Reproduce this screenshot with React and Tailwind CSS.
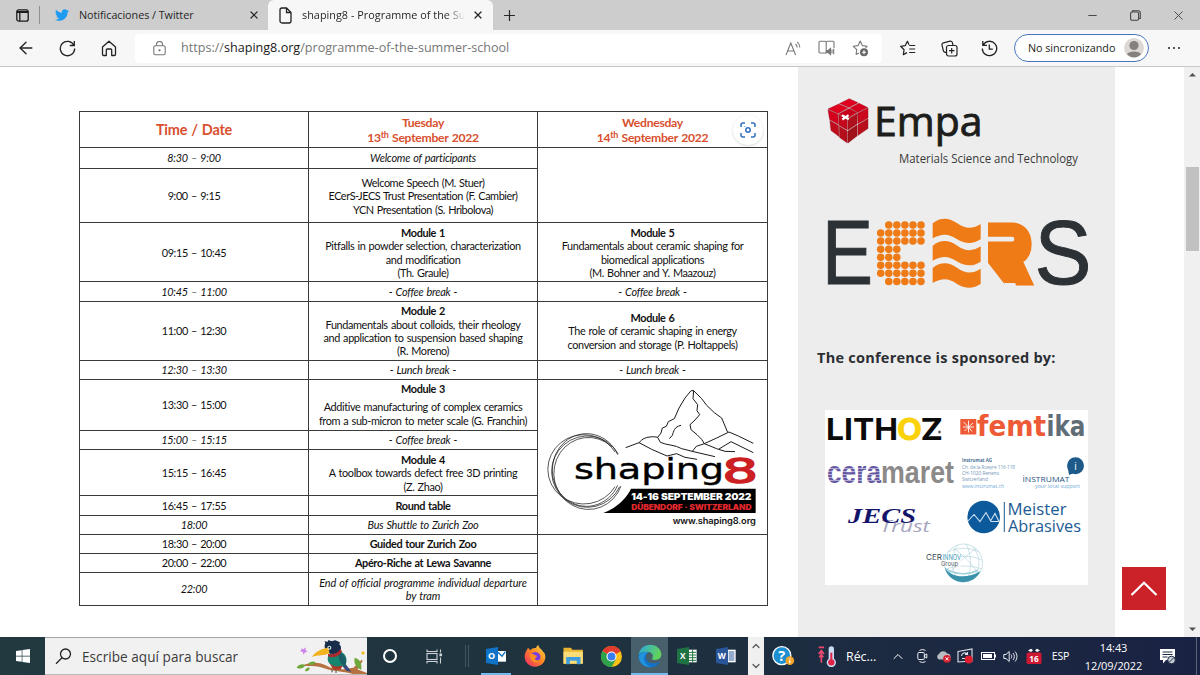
import React from 'react';
import clsx from 'clsx';
import { ArrowLeft, ChevronUp, ChevronDown, X, Plus, Minus } from 'lucide-react';
import { FaWindows, FaTwitter } from 'react-icons/fa';

const UI = 'font-["Open_Sans","Noto_Sans",sans-serif]';

/* Text inside a logo, fitted to a given width */
const Fit = ({ w, children, ...rest }) => (
    <text textLength={w} lengthAdjust="spacingAndGlyphs" {...rest}>{children}</text>
);

// ---------- Browser chrome ----------

const TabStrip = () => (
    <div className="flex h-[30px] shrink-0 items-stretch bg-[#cdcdcd] text-[10.8px] text-[#262626]">
        <div className="flex w-[39px] items-center justify-center pl-[6px]">
            <svg width="13" height="13" viewBox="0 0 13 13" fill="none" stroke="#1b1b1b" strokeWidth="1.3">
                <rect x=".8" y=".8" width="11.4" height="11.4" rx="2" />
                <path d="M1 3h11" strokeWidth="2" />
                <path d="M3.8 3v9" />
            </svg>
        </div>
        <div className="my-1.5 w-px bg-[#8f8f8f]" />
        <div className="flex w-[228px] items-center pl-[15px]">
            <FaTwitter size={14} color="#1d9bf0" />
            <span className="ml-[10px] flex-1 tracking-[-0.05px]">Notificaciones / Twitter</span>
            <X size={12} strokeWidth={2.4} className="mr-[8px]" />
        </div>
        <div className="flex w-[225px] items-center rounded-t-md bg-[#f7f7f7] pl-[11px]">
            <svg width="13" height="17" viewBox="0 0 13 17" fill="none" stroke="#222" strokeWidth="1.3">
                <path d="M1 3a2 2 0 0 1 2-2h4.500l4.500 4.500V14a2 2 0 0 1-2 2H3a2 2 0 0 1-2-2z" />
                <path d="M7.500 1v4.500H12" />
            </svg>
            <span className="ml-[10px] w-[163px] overflow-hidden whitespace-nowrap tracking-[0.04px] [mask-image:linear-gradient(to_right,black_88%,transparent)]">
                shaping8 - Programme of the Su
            </span>
            <X size={12} strokeWidth={2.4} className="ml-[7px] shrink-0" />
        </div>
        <div className="flex flex-1 items-center pl-[8px]">
            <Plus size={17} strokeWidth={1.7} />
        </div>
        <div className="flex items-center text-[#444]">
            <Minus size={13} strokeWidth={1.8} className="mr-[31px]" />
            <svg width="11" height="11" viewBox="0 0 11 11" fill="none" stroke="#444" strokeWidth="1.1" className="mr-[30px]">
                <rect x=".6" y="2" width="8" height="8.300" rx="1.500" />
                <path d="M2.500 2V.8h6a1.800 1.800 0 0 1 1.800 1.800V8.500H9" />
            </svg>
            <X size={15} strokeWidth={1.5} className="mr-[14px]" />
        </div>
    </div>
);

const Toolbar = () => (
    <div className="flex h-[37px] shrink-0 items-center border-b border-[#c8c8c8] bg-[#f7f7f7]">
        <ArrowLeft size={20} strokeWidth={1.6} className="ml-[16px] text-[#222]" />
        <svg width="17" height="17" viewBox="0 0 17 17" fill="none" stroke="#222" strokeWidth="1.3" className="ml-[23px]">
            <path d="M15 5.400A7.200 7.200 0 1 0 15.700 8.600" />
            <path d="M15.300 1v4.500h-4.500" />
        </svg>
        <svg width="16" height="17" viewBox="0 0 16 17" fill="none" stroke="#222" strokeWidth="1.3" strokeLinejoin="round" className="ml-[25px]">
            <path d="M1.500 7 8 1.300 14.500 7v7.300a1.200 1.200 0 0 1-1.200 1.200h-2.600V10a1 1 0 0 0-1-1H6.300a1 1 0 0 0-1 1v5.500H2.700a1.200 1.200 0 0 1-1.200-1.200z" />
        </svg>
        <div className="ml-[18px] flex h-[29px] w-[747px] items-center rounded bg-white pl-[18px]">
            <svg width="13" height="15" viewBox="0 0 13 15" fill="none" stroke="#777" strokeWidth="1.1">
                <rect x=".8" y="4.800" width="11.400" height="9" rx="1.500" />
                <path d="M3.500 4.800V3.500a3 3 0 0 1 6 0v1.300" />
                <circle cx="6.500" cy="9.300" r=".6" fill="#777" />
            </svg>
            <span className="ml-[15px] w-[330px] whitespace-nowrap text-[12.6px] text-[#767676]">
                https://<span className="text-[#1a1a1a]">shaping8.org</span>/programme-of-the-summer-school
            </span>
            <div className="ml-auto flex items-center gap-[17px] pr-[13px]">
                <svg width="16" height="15" viewBox="0 0 16 15" fill="none" stroke="#777" strokeWidth="1.1">
                    <path d="M1 14 5.800 2 10.600 14M2.700 10h6.200M10.500 2.800a5 5 0 0 1 1.600 3.700M12.200.8a8 8 0 0 1 2.600 5.700" />
                </svg>
                <svg width="17" height="16" viewBox="0 0 17 16" fill="none" stroke="#777" strokeWidth="1.1">
                    <path d="M8.200 13H2a1 1 0 0 1-1-1V2.300a1 1 0 0 1 1-1h5a1.200 1.200 0 0 1 1.200 1.200zM8.200 2.500a1.200 1.200 0 0 1 1.200-1.200H15a1 1 0 0 1 1 1V8" />
                    <path d="M8.500 10.500h1.700l2.300-2v6l-2.300-2H8.500z" fill="#777" />
                    <path d="M14 9.500v4M15.700 8.700v5.600" />
                </svg>
                <svg width="17" height="17" viewBox="0 0 17 17" fill="none" stroke="#777" strokeWidth="1.1" strokeLinejoin="round">
                    <path d="m4 14.500.8-4.800L1.300 6.300l4.800-.7L8.200 1l2.200 4.600 4.700.7-1.500 1.600M4 14.500l3-1.600" />
                    <circle cx="12" cy="12.300" r="4" fill="#666" stroke="none" />
                    <path d="M12 10.300v4M10 12.300h4" stroke="#fff" />
                </svg>
            </div>
        </div>
        <svg width="16" height="16" viewBox="0 0 16 16" fill="none" stroke="#222" strokeWidth="1.2" strokeLinejoin="round" className="ml-[18px]">
            <path d="m9 4.700-1.600-3.500L5.300 5.600.6 6.300l3.500 3.400-.8 4.900L7 12.600M9.200 5.500h6M9.200 9h6M9.200 12.500h6" />
        </svg>
        <svg width="17" height="17" viewBox="0 0 17 17" fill="none" stroke="#222" strokeWidth="1.2" className="ml-[25px]">
            <rect x="5.500" y="5.500" width="10.500" height="10.500" rx="2" />
            <path d="M10.700 8v5.500M8 10.700h5.500M12 5.300l-.6-2.600A2 2 0 0 0 9 1.200L2.500 2.800A2 2 0 0 0 1 5.200l1.400 5.600a2 2 0 0 0 3 1.200" />
        </svg>
        <svg width="17" height="17" viewBox="0 0 17 17" fill="none" stroke="#222" strokeWidth="1.3" className="ml-[23px]">
            <path d="M2.300 4.800A7.200 7.200 0 1 1 1.300 8.500M1.800 1v4.300H6M8.300 4.500v4.700h3.500" />
        </svg>
        <div className="ml-[16px] flex h-[28px] w-[135px] items-center justify-between rounded-full border-[1.5px] border-[#4b76bd] bg-white pl-[13px] pr-[4px]">
            <span className="whitespace-nowrap text-[10.8px] tracking-[-0.05px] text-[#222]">No sincronizando</span>
            <svg width="20" height="20" viewBox="0 0 20 20">
                <circle cx="10" cy="10" r="10" fill="#dcd8d5" />
                <circle cx="10" cy="7.500" r="4.600" fill="#85817e" />
                <path d="M3 16.200C4.500 12.600 15.500 12.600 17 16.200A9.500 9.500 0 0 1 3 16.200" fill="#85817e" />
            </svg>
        </div>
        <div className="ml-[18.500px] flex gap-[2.5px]">
            <i className="size-[2.5px] rounded-full bg-[#222]" />
            <i className="size-[2.5px] rounded-full bg-[#222]" />
            <i className="size-[2.5px] rounded-full bg-[#222]" />
        </div>
    </div>
);

// ---------- Programme table ----------

const Shaping8Logo = () => (
    <svg width="229" height="154" viewBox="9 6 687 462" fill="none" stroke="#1a1a1a" strokeWidth="3">
        <g strokeWidth="2.200">
            <path d="M250 228A107 107 0 1 0 254 326" />
            <path d="M240 222A108 104 0 1 0 240 326" />
            <path d="M248 230A103 109 0 1 0 248 322" />
            <path d="M230 206A104 108 0 1 0 258 324" />
        </g>
        <path d="M272 209 312 194C322 183 330 178 345 177 355 175 362 177 368 178L378 165 382 150 394 145 400 131 418 122 432 90 450 60 468 38 476 38 500 62 515 82 538 104 560 120 578 163" />
        <path d="M476 38 474 62 488 80 486 98 494 110 480 126 465 140 468 155 486 170 500 184 508 197 484 205 472 220" />
        <path d="M438 142C418 146 416 160 412 172L403 182" />
        <path d="M368 178 376 193C395 202 420 200 440 212L480 222 540 236M312 194 350 214 396 234 425 227 450 238 486 244M508 197 545 180 582 162 610 174 655 196M508 197 545 212 570 220 600 221M552 213 588 191 655 224" />
        <g stroke="none">
            <Fit x="117" y="304" w="450" fontSize="84" fill="#000" stroke="#000" strokeWidth="1.200" fontFamily="DejaVu Sans">shaping</Fit>
            <Fit x="562" y="316" w="107" fontSize="99" fill="#cc1f24" stroke="#cc1f24" strokeWidth="4" fontFamily="DejaVu Sans">8</Fit>
            <path d="M662 332V405H205C245 390 275 360 288 332Z" fill="#000" />
            <Fit x="289" y="365" w="360" fontSize="28" fontWeight="900" fill="#fff" fontFamily="Inter">14-16 SEPTEMBER 2022</Fit>
            <Fit x="289" y="395" w="360" fontSize="23.500" fontWeight="900" fill="#e0282d" fontFamily="Inter">DÜBENDORF · SWITZERLAND</Fit>
            <Fit x="413" y="438" w="249" fontSize="26" fontWeight="600" fill="#111" fontFamily="Inter">www.shaping8.org</Fit>
        </g>
    </svg>
);

const Cell = ({ className, children }) => (
    <div className={clsx('flex flex-col items-center justify-center whitespace-nowrap border-b border-r border-[#3a3a3a] text-center', className)}>
        {children}
    </div>
);

const Module = ({ title, lines }) => (
    <>
        <b>{title}</b>
        {lines.map(l => <span key={l}>{l}</span>)}
    </>
);

const DateHead = ({ day, num }) => (
    <Cell className="text-[12.2px] font-bold leading-[15px] tracking-[-0.3px] text-[#d8502f]">
        <span>{day}</span>
        <span>{num}<sup className="relative -top-[4px] text-[9px] leading-none">th</sup> September 2022</span>
    </Cell>
);

const Programme = () => (
    <div className='relative ml-[79px] mt-[44px] grid w-[689px] grid-cols-[229px_229px_230px] grid-rows-[36px_21px_54px_59px_20px_59px_19px_51px_19px_46px_20px_19px_19px_19px_33px] border-l border-t border-[#3a3a3a] font-["Lato",sans-serif] text-[10.9px] leading-[13.3px] tracking-[-0.38px] text-[#111] [word-spacing:0.8px]'>
        <Cell className="text-[14.5px] font-bold tracking-[-0.25px] text-[#d8502f]">Time / Date</Cell>
        <DateHead day="Tuesday" num="13" />
        <DateHead day="Wednesday" num="14" />

        <Cell className="italic tracking-[-0.25px]">8:30 – 9:00</Cell>
        <Cell className="italic tracking-[-0.25px]">Welcome of participants</Cell>
        <Cell className="row-span-2" />

        <Cell className="pt-px">9:00 – 9:15</Cell>
        <Cell className="pt-px tracking-[-0.45px]">
            <span>Welcome Speech (M. Stuer)</span>
            <span>ECerS-JECS Trust Presentation (F. Cambier)</span>
            <span>YCN Presentation (S. Hribolova)</span>
        </Cell>

        <Cell className="pt-px">09:15 – 10:45</Cell>
        <Cell className="pt-px"><Module title="Module 1" lines={['Pitfalls in powder selection, characterization', 'and modification', '(Th. Graule)']} /></Cell>
        <Cell className="pt-px"><Module title="Module 5" lines={['Fundamentals about ceramic shaping for', 'biomedical applications', '(M. Bohner and Y. Maazouz)']} /></Cell>

        <Cell className="pt-px italic tracking-[-0.25px]">10:45 – 11:00</Cell>
        <Cell className="pt-px italic tracking-[-0.25px]">- Coffee break -</Cell>
        <Cell className="pt-px italic tracking-[-0.25px]">- Coffee break -</Cell>

        <Cell>11:00 – 12:30</Cell>
        <Cell><Module title="Module 2" lines={['Fundamentals about colloids, their rheology', 'and application to suspension based shaping', '(R. Moreno)']} /></Cell>
        <Cell><Module title="Module 6" lines={['The role of ceramic shaping in energy', 'conversion and storage (P. Holtappels)']} /></Cell>

        <Cell className="italic tracking-[-0.25px]">12:30 – 13:30</Cell>
        <Cell className="italic tracking-[-0.25px]">- Lunch break -</Cell>
        <Cell className="italic tracking-[-0.25px]">- Lunch break -</Cell>

        <Cell>13:30 – 15:00</Cell>
        <Cell className="leading-[14px]">
            <b className="mb-1">Module 3</b>
            <span>Additive manufacturing of complex ceramics</span>
            <span>from a sub-micron to meter scale (G. Franchin)</span>
        </Cell>
        <Cell className="row-span-5"><Shaping8Logo /></Cell>

        <Cell className="italic tracking-[-0.25px]">15:00 – 15:15</Cell>
        <Cell className="italic tracking-[-0.25px]">- Coffee break -</Cell>

        <Cell className="pt-px">15:15 – 16:45</Cell>
        <Cell className="pt-px"><Module title="Module 4" lines={['A toolbox towards defect free 3D printing', '(Z. Zhao)']} /></Cell>

        <Cell>16:45 – 17:55</Cell>
        <Cell className="font-bold">Round table</Cell>

        <Cell className="italic tracking-[-0.25px]">18:00</Cell>
        <Cell className="italic tracking-[-0.25px]">Bus Shuttle to Zurich Zoo</Cell>

        <Cell>18:30 – 20:00</Cell>
        <Cell className="font-bold">Guided tour Zurich Zoo</Cell>
        <Cell className="row-span-3" />

        <Cell>20:00 – 22:00</Cell>
        <Cell className="font-bold">Apéro-Riche at Lewa Savanne</Cell>

        <Cell className="italic tracking-[-0.25px]">22:00</Cell>
        <Cell className="italic tracking-[-0.12px]">
            <span>End of official programme individual departure</span>
            <span>by tram</span>
        </Cell>

        {/* visual search button */}
        <div className="absolute right-[5px] top-[3px] flex size-[30px] items-center justify-center rounded-full bg-white shadow-[0_1px_3px_rgba(0,0,0,0.15)]">
            <svg width="16" height="16" viewBox="0 0 16 16" fill="none" stroke="#2f6fbf" strokeWidth="1.5">
                <path d="M1 5V3a2 2 0 0 1 2-2h2M11 1h2a2 2 0 0 1 2 2v2M15 11v2a2 2 0 0 1-2 2h-2M5 15H3a2 2 0 0 1-2-2v-2" />
                <circle cx="8" cy="8" r="2.200" />
                <circle cx="4.800" cy="4.500" r=".5" fill="#2f6fbf" stroke="none" />
            </svg>
        </div>
    </div>
);

// ---------- Sidebar ----------

const EmpaLogo = () => (
    <svg width="317" height="78" viewBox="798 97 317 78" className="mt-[30px]">
        <g stroke="#8f0d18" strokeWidth=".4" strokeLinejoin="round">
            <path d="M849.300 98.700 858 102.700 849 107.500 839.500 103.500Z" fill="#e2001f" />
            <path d="M859 103.300 867.600 107.500 857.500 112.500 850 108Z" fill="#d5001e" />
            <path d="M838.700 104 848 108 838 113.500 828 109Z" fill="#e2001f" />
            <path d="M849.200 108.400 857 112.600 847.500 118.500 838.700 114Z" fill="#c9001c" />
            <path d="M828 109.700 837.700 114 838.500 124.500 829.600 119.500Z" fill="#d4001d" />
            <path d="M838.500 114.500 847.300 119 847.300 130 839 125.200Z" fill="#c4081c" />
            <path d="M829.800 120.500 838.500 125.500 839 136.500 831 130.500Z" fill="#c00b1d" />
            <path d="M839.300 126.200 847.300 131 847.300 143 839.600 137.500Z" fill="#b50f1c" />
            <path d="M848 119 857.500 113.200 857 124 848 130Z" fill="#ae101c" />
            <path d="M858 113 868 108 868 118 857.800 123.700Z" fill="#cb081c" />
            <path d="M848 131 857 125 857 136 848 143Z" fill="#a01119" />
            <path d="M857.800 124.700 868 118.800 868 128.500 857.800 135.500Z" fill="#b90e1c" />
        </g>
        <path d="m842 115.300 6.800 4M842.300 119.500l6.300-4.400" stroke="#fff" strokeWidth="2.200" />
        <Fit x="874" y="136" w="108.500" fontSize="41" fill="#1d1d1b" stroke="#1d1d1b" strokeWidth=".9" fontFamily="Open Sans">Empa</Fit>
        <Fit x="899" y="162.500" w="179" fontSize="12.500" fill="#3a3a3a" fontFamily="Open Sans">Materials Science and Technology</Fit>
    </svg>
);

// first / last filled column of every dot row of the "C"
const DOT_ROWS = [[1, 5], [0, 5], [0, 5], [0, 2], [0, 2], [0, 5], [0, 5], [1, 5]];
const WAVE = 'M368 430C395 408 420 415 442 430 465 446 485 449 512 432V478C490 493 465 493 440 477 418 462 398 458 368 475Z';

const EcersLogo = () => (
    <svg width="317" height="80" viewBox="798 214 317 80" className="mt-[39px]">
        <g fontFamily="Liberation Sans" fontSize="90" fill="#2b3135" stroke="#2b3135" strokeWidth="1">
            <Fit x="822" y="284" w="51">E</Fit>
            <Fit x="1034.500" y="283.500" w="57">S</Fit>
        </g>
        <g fill="#ef7b17">
            {DOT_ROWS.map(([from, to], r) =>
                [0, 1, 2, 3, 4, 5].filter(c => c >= from && c <= to).map(c => (
                    <circle key={`${r}-${c}`} cx={880.7 + c * 8.06} cy={225 + r * 8.06} r="3.750" />
                ))
            )}
            <g transform="translate(810 80) scale(.33333)">
                <path d={WAVE} />
                <path d={WAVE} transform="translate(0 67)" />
                <path d={WAVE} transform="translate(0 134)" />
            </g>
            <Fit x="986" y="283.500" w="47" fontFamily="Inter" fontSize="83" fontWeight="900" stroke="#ef7b17" strokeWidth="3">R</Fit>
            <path d="M990 230h27l6 8v14l-6 9 4 22h-16l-15-22z" />
        </g>
        <path d="M985 236.800H1012a2.300 2.300 0 0 1 0 4.800H985ZM985 259 1006 286H985Z" fill="#ededed" />
    </svg>
);

const LithozLogo = () => (
    <svg width="132" height="40" viewBox="825 410 132 40">
        <g fontFamily="Inter" fontSize="29.500" fontWeight="700">
            <Fit x="826" y="440" w="72" fill="#0b0b0b">LITH</Fit>
            <Fit x="897" y="440" w="25" fill="#fbd20a" stroke="#fbd20a" strokeWidth=".8">O</Fit>
            <Fit x="920.500" y="440" w="22.500" fill="#0b0b0b">Z</Fit>
        </g>
        <circle cx="939.500" cy="432" r="1.700" fill="#444" stroke="#fff" strokeWidth=".8" />
    </svg>
);

const FemtikaLogo = () => (
    <svg width="131" height="40" viewBox="957 410 131 40">
        <rect x="960.300" y="419" width="16" height="15.500" fill="#ee5a36" />
        <path d="M968.500 426.500v-6M968.500 427l4.500-4M968.500 427h5.500M968.500 427l3.500 4.500M968.500 427v5.500M968.500 427l-4 4M968.500 427h-5.500M968.500 427l-5-5" stroke="#fff" strokeWidth=".9" />
        <g fontFamily="DejaVu Sans" fontWeight="700" fontSize="28">
            <Fit x="977" y="435.500" w="69" fill="#ee5a36">femt</Fit>
            <Fit x="1046.500" y="435.500" w="39" fill="#5f6d76">ika</Fit>
        </g>
    </svg>
);

const CeramaretLogo = () => (
    <svg width="132" height="45" viewBox="825 450 132 45">
        <g fontFamily="Liberation Sans" fontWeight="700" fontSize="31">
            <Fit x="827" y="482.500" w="54" fill="#6658a3">cera</Fit>
            <Fit x="881" y="482.500" w="73" fill="#8c8989">maret</Fit>
        </g>
        <path d="M827 468.500h53M827 471.500h53M827 474.500h53M827 477.500h53M827 480.500h53" stroke="#fff" strokeWidth=".5" />
    </svg>
);

const InstrumatLogo = () => (
    <svg width="131" height="45" viewBox="957 450 131 45" fontFamily="Open Sans" fontSize="4.800" fill="#7295b8">
        <Fit x="962" y="462" w="30" fontWeight="700" fill="#4d7192">Instrumat AG</Fit>
        <Fit x="962" y="469" w="53">Ch. de la Rueyre 116-118</Fit>
        <Fit x="962" y="474.800" w="37">CH-1020 Renens</Fit>
        <Fit x="962" y="480.800" w="26">Switzerland</Fit>
        <Fit x="962" y="487.800" w="42" fill="#72a9d6">www.instrumat.ch</Fit>
        <Fit x="1022.500" y="482" w="47" fontSize="7.800" fill="#1f5383">İNSTRUMAT</Fit>
        <Fit x="1035" y="487.800" w="45" fontSize="5" fill="#72a9d6">your local support</Fit>
        <path d="M1068 468 1069 475 1074 473Z" fill="#1d5a8a" />
        <circle cx="1075.500" cy="465.800" r="8.500" fill="#1d5a8a" />
        <text x="1075.500" y="469.500" fontSize="10" fill="#fff" textAnchor="middle">i</text>
    </svg>
);

const JecsLogo = () => (
    <svg width="132" height="45" viewBox="825 495 132 45">
        <Fit x="880" y="532" w="50" fontFamily="Open Sans" fontStyle="italic" fontSize="15.500" fill="#a5a5be">Trust</Fit>
        <Fit x="848" y="523" w="68" fontFamily="Liberation Serif" fontStyle="italic" fontWeight="700" fontSize="21" fill="#14146b">JECS</Fit>
    </svg>
);

const MeisterLogo = () => (
    <svg width="131" height="45" viewBox="957 495 131 45">
        <circle cx="983.700" cy="517" r="16.300" fill="#0c5a9c" />
        <path d="M968 521 974 514.500 980 521.500 986 512.500 991 521.500H999L995 513.500 990.500 521" fill="none" stroke="#cfe2f2" strokeWidth="1.100" />
        <path d="M1004.300 502v30" stroke="#1c5b94" strokeWidth="1" />
        <g fontFamily="Open Sans" fontSize="17" fill="#1c5b94">
            <Fit x="1007.500" y="514.700" w="59">Meister</Fit>
            <Fit x="1008" y="532" w="73">Abrasives</Fit>
        </g>
    </svg>
);

const CerinnovLogo = () => (
    <svg width="263" height="45" viewBox="825 540 263 45" className="col-span-2">
        <g fill="none" stroke="#9cc8d3" strokeWidth=".5">
            <circle cx="963.500" cy="563" r="19" />
            <path d="M948 552c10-5 22-5 31 0M945 560c12-5 26-5 37 0M946 569c12-4 24-4 36 0M958 545c-8 10-8 26 2 37M966 544c6 10 6 26 0 38M973 547c8 10 8 22 0 32M953 548c10 6 20 18 26 26M976 549c-10 6-20 16-27 25" />
        </g>
        <path d="M944.600 567C950 577 966 580 980.500 571A19 19 0 0 1 944.600 567" fill="#3a93ab" />
        <path d="M946 569C954 574 968 576 978 570" fill="none" stroke="#9fd0dc" strokeWidth="1.500" />
        <rect x="926" y="553.500" width="35" height="13" fill="#fff" opacity=".75" />
        <Fit x="926" y="560" w="16" fontFamily="Inter" fontSize="7.500" fill="#3d4b55">CER</Fit>
        <Fit x="942.500" y="560" w="18.500" fontFamily="Inter" fontSize="7.500" fill="#4da0b8">INNOV</Fit>
        <Fit x="941" y="566" w="17" fontFamily="Inter" fontSize="6.500" fill="#4c565c">Group</Fit>
    </svg>
);

const Sidebar = () => (
    <aside className="flex w-[317px] flex-col bg-[#ededed]">
        <EmpaLogo />
        <EcersLogo />
        <h2 className="ml-[19px] mt-[54px] whitespace-nowrap text-[14.5px] font-bold leading-[20px] tracking-[0.25px] text-[#2b2f33]">The conference is sponsored by:</h2>
        <div className="ml-[27px] mt-[42px] grid w-[263px] grid-cols-[132px_131px] bg-white">
            <LithozLogo />
            <FemtikaLogo />
            <CeramaretLogo />
            <InstrumatLogo />
            <JecsLogo />
            <MeisterLogo />
            <CerinnovLogo />
        </div>
    </aside>
);

// ---------- Taskbar ----------

const Toucan = () => (
    <svg width="71" height="36" viewBox="888 23 213 108" className="ml-auto">
        <path d="M905 106C930 96 955 92 980 106S1030 118 1060 112L1101 128V131H1058C1030 122 990 122 968 112 945 104 925 108 905 106" fill="#b5713f" />
        <path d="M1060 112 1085 88 1088 92 1072 118" fill="#b5713f" />
        <path d="M890 112c6-10 18-12 26-8-4 10-16 14-26 8M925 100c6-8 16-8 22-4-4 8-14 12-22 4M915 122c2-8 8-12 14-10 0 8-6 12-14 10M1064 82c16 4 22 16 20 36-14-6-24-18-20-36" fill="#6ea83a" />
        <path d="M1030 92 1054 124 1040 122 1024 104" fill="#3b4a7d" />
        <path d="M1008 60C1034 62 1046 84 1036 104 1022 116 990 110 984 92 980 78 988 64 1008 60" fill="#16856f" />
        <path d="M988 98c8 10 28 14 40 6l-6 14h-22z" fill="#a93a2a" />
        <path d="M1018 66c18 8 26 26 16 42-12-6-22-22-16-42" fill="#1d5f66" />
        <path d="M974 50C972 34 990 30 1006 36 1024 40 1028 56 1018 66 1000 76 978 70 974 50" fill="#1a2c4c" />
        <path d="M984 70c12 4 28 0 38-14l4 8c-10 16-30 20-42 14z" fill="#a82b2f" />
        <path d="M986 52C966 54 944 64 936 80 954 72 974 78 988 68Z" fill="#f3b21f" />
        <circle cx="988" cy="52" r="6" fill="#cfe6ef" />
        <circle cx="988" cy="52" r="2.500" fill="#111" />
        <path d="m976 40-2-8 8 3 4-6 8 4 12-3 14 6-2 6z" fill="#1a2c4c" />
        <path d="m903 54 8 3 6-6 0 9 6 5-8 1-4 7-3-8-8-3 5-4z" fill="#cf82e6" />
        <circle cx="1089" cy="68" r="5" fill="#f4bd25" />
        <path d="M996 118v8M1008 120v8" stroke="#444" strokeWidth="3" />
    </svg>
);

const Outlook = () => (
    <svg width="20" height="18" viewBox="0 0 60 54">
        <path d="M34 12h26v32H34z" fill="#fff" />
        <path d="m36 16 12 12 10-14" fill="none" stroke="#0a72c4" strokeWidth="4" />
        <path d="M0 6 36 0v54L0 48z" fill="#0f74c8" />
        <text x="17" y="36" fontSize="27" fontWeight="700" fontFamily="Open Sans" fill="#fff" textAnchor="middle">O</text>
    </svg>
);

const Firefox = () => (
    <svg width="22" height="22" viewBox="0 0 64 64">
        <defs>
            <linearGradient id="ff" x1="1" y1="0" x2="0" y2="1">
                <stop offset="0" stopColor="#ffe14a" />
                <stop offset=".45" stopColor="#ff8a22" />
                <stop offset="1" stopColor="#f0246a" />
            </linearGradient>
        </defs>
        <path d="M6 18 12 8 18 15C23 10 29 8 35 9 36 4 39 1 42 0 42 8 52 12 56 20 60 22 63 30 62 38 60 53 48 63 32 63 15 63 2 50 2 34 2 27 4 22 6 18" fill="url(#ff)" />
        <circle cx="33" cy="35" r="15" fill="#7a3ee0" />
        <path d="M18 27c6-3 11 0 14 3 6 0 8 3 3 6-4 2-4 6 2 8 6 1 9-2 12-5-2 10-12 14-20 11-8-3-13-12-11-23" fill="#ff8f1f" />
    </svg>
);

const Explorer = () => (
    <svg width="21" height="18" viewBox="0 0 62 54">
        <path d="M1 2h22l5 6h31v42H1z" fill="#eab632" />
        <path d="M1 14h58v36H1z" fill="#fbdc76" />
        <path d="M9 30h43v22H41V41H20v11H9z" fill="#3f9ee0" />
    </svg>
);

const Chrome = () => (
    <svg width="21" height="21" viewBox="0 0 48 48">
        <circle cx="24" cy="24" r="24" fill="#fbc116" />
        <path d="M24 24 3.200 12A24 24 0 0 1 44.800 12Z" fill="#e33b2e" />
        <path d="M3.200 12A24 24 0 0 0 24 48L34.400 30 24 24Z" fill="#2ca24c" />
        <circle cx="24" cy="24" r="11.500" fill="#fff" />
        <circle cx="24" cy="24" r="9" fill="#3b7ded" />
    </svg>
);

const Edge = () => (
    <svg width="24" height="24" viewBox="0 0 72 72">
        <defs>
            <linearGradient id="edge" x1="0" y1="0" x2="1" y2=".3">
                <stop offset="0" stopColor="#2aa5e0" />
                <stop offset="1" stopColor="#62d35c" />
            </linearGradient>
        </defs>
        <path d="M2 34C4 14 19 2 37 2 56 2 70 16 70 31 70 42 62 48 52 48 44 48 41 45 43 41 47 36 44 26 32 24 18 22 6 26 2 34" fill="url(#edge)" />
        <path d="M2 34C8 24 22 22 32 25 24 28 22 38 25 46 30 58 44 62 66 53 60 64 48 71 36 70 15 70 0 54 2 34" fill="#1372c8" />
        <path d="M32 25C18 30 14 46 22 56 27 63 34 68 42 69.500 22 73 3 58 2 36 8 24 22 22 32 25" fill="#2193dc" />
    </svg>
);

const OfficeIcon = ({ letter, color, sheet }) => (
    <svg width="20" height="18" viewBox="0 0 60 54">
        <path d="M30 8h29v38H30z" fill="#fff" />
        <path d={sheet} stroke={color} strokeWidth="3" fill="none" />
        <path d="M0 6 36 0v54L0 48z" fill={color} />
        <text x="17" y="36" fontSize="25" fontWeight="700" fontFamily="Open Sans" fill="#fff" textAnchor="middle">{letter}</text>
    </svg>
);

const Slot = ({ className, children }) => (
    <div className={clsx('flex shrink-0 items-center justify-center', className)}>{children}</div>
);

const Tray = () => (
    <div className="flex flex-1 items-stretch">
        <Slot className="w-[38px]">
            <svg width="23" height="20" viewBox="0 0 66 60">
                <circle cx="28" cy="29" r="27" fill="#1b8fd2" stroke="#fff" strokeWidth="4" />
                <text x="28" y="45" fontSize="44" fontWeight="700" fontFamily="Open Sans" fill="#fff" textAnchor="middle">?</text>
                <circle cx="52" cy="44" r="13" fill="#f2a52a" />
                <path d="M52 37v3M52 43v9" stroke="#fff" strokeWidth="4" />
            </svg>
        </Slot>
        <Slot className="ml-[12px] w-[26px]">
            <svg width="19" height="21" viewBox="0 0 57 63">
                <path d="M2 4h16M10 50V12M2 24l8-10 8 10M4 34l6-8 6 8" stroke="#ea4a72" strokeWidth="5" fill="none" />
                <path d="M32 9a8 8 0 0 1 16 0v29a14 14 0 1 1-16 0z" fill="#c9dcf4" />
                <circle cx="40" cy="49" r="9.500" fill="#e02347" />
                <path d="M40 20v30" stroke="#e02347" strokeWidth="6" />
            </svg>
        </Slot>
        <span className="ml-[6px] w-[44px] self-center pt-[3px] text-[12.4px]">Réc...</span>
        <Slot className="w-[16px]"><ChevronUp size={17} strokeWidth={1.5} /></Slot>
        <Slot className="w-[32px]">
            <svg width="11" height="14" viewBox="0 0 11 14" fill="none" stroke="#e8ecf2">
                <rect x=".8" y="3.500" width="6.500" height="7" rx="1" />
                <path d="m7.300 6.500 2.500-1.500v4L7.300 7.500M2.500 1.500C4.500.3 6.500.3 8.500 1.500M2.500 12.500c2 1.200 4 1.200 6 0" />
            </svg>
        </Slot>
        <Slot className="w-[11px]">
            <svg width="16" height="13" viewBox="0 0 16 13" className="shrink-0">
                <path d="M3 9.500A3 3 0 0 1 3 4 4.500 4.500 0 0 1 11 3.500 3 3 0 0 1 12 9.500z" fill="#b9bdc2" />
                <circle cx="11" cy="8.800" r="3.900" fill="#d6202f" />
                <path d="m9.500 7.300 3 3m0-3-3 3" stroke="#fff" />
            </svg>
        </Slot>
        <Slot className="w-[32px]">
            <svg width="16" height="16" viewBox="0 0 16 16" fill="none" stroke="#dfe4ea" strokeWidth="1.100">
                <path d="M1 3.500 15 1v12L1 14zM4.500 8a3.200 3.200 0 0 1 5.800-1.800M10.500 4v2.400H8M5 10.500h3" />
                <circle cx="11.700" cy="11.500" r="4" fill="#dc1f30" stroke="none" />
            </svg>
        </Slot>
        <Slot className="w-[15px]">
            <svg width="15" height="8" viewBox="0 0 15 8">
                <rect x=".5" y=".5" width="13" height="7" fill="none" stroke="#fff" />
                <path d="M2 2h9v4H2zM14 2.500h1v3h-1z" fill="#fff" />
            </svg>
        </Slot>
        <Slot className="w-[29px]">
            <svg width="15" height="13" viewBox="0 0 15 13" fill="none" stroke="#e8ecf2">
                <path d="M.8 4.500H3L6.200 1.500v10L3 8.500H.8zM8 4.500c1 1.300 1 2.700 0 4M10 3c1.800 2 1.800 5 0 7M12 1.500c2.600 3 2.600 7 0 10" />
            </svg>
        </Slot>
        <Slot className="w-[17px]">
            <svg width="16" height="17" viewBox="0 0 16 17">
                <path d="M2 2.500 5 .8 7 2.300 5 4zM9 2.300 11 .8l3 1.700L11 4z" fill="#fff" />
                <rect x=".5" y="4.500" width="15" height="11.500" rx="1.500" fill="#cf1733" />
                <text x="8" y="13.500" fontSize="8.200" fontWeight="700" fontFamily="Open Sans" fill="#fff" textAnchor="middle">16</text>
            </svg>
        </Slot>
        <Slot className="w-[37px] pt-[2px] text-[10.6px] tracking-[-0.2px]">ESP</Slot>
        <div className="flex w-[69px] flex-col items-center justify-center pt-px text-[11px] leading-[17.500px] tracking-[-0.1px]">
            <span>14:43</span>
            <span className="whitespace-nowrap">12/09/2022</span>
        </div>
        <Slot className="w-[38px]">
            <svg width="17" height="17" viewBox="0 0 17 17">
                <path d="M1 1h15v11H7l-3 3.500V12H1z" fill="#fff" />
                <path d="M3.500 4h10M3.500 6.500h10M3.500 9h5" stroke="#1c2a45" />
                <circle cx="12.500" cy="12" r="3.800" fill="#c9ced6" stroke="#1c2a45" />
                <path d="m10 14.500 5-5" stroke="#1c2a45" />
            </svg>
        </Slot>
        <div className="ml-[10px] w-px bg-[#596379]" />
    </div>
);

const Taskbar = () => (
    <div className="flex h-[38px] shrink-0 items-stretch bg-linear-to-r from-[#21393f] via-[#1f323f] to-[#1a2243] text-white">
        <Slot className="w-[45px]"><FaWindows size={16} /></Slot>
        <div className="flex w-[322px] items-center border-y border-t-[#9fa5a8] border-b-[#b9b9b9] bg-[#f1f1f1] pl-[10px]">
            <svg width="17" height="17" viewBox="0 0 17 17" fill="none" stroke="#222" strokeWidth="1.300">
                <circle cx="10.500" cy="6" r="5" />
                <path d="M7 9.700 1 15.800" />
            </svg>
            <span className="ml-[10px] whitespace-nowrap pt-[3px] text-[13.600px] tracking-[0.03px] text-[#3b3b3b]">Escribe aquí para buscar</span>
            <Toucan />
        </div>
        <Slot className="w-[45px]"><i className="size-[14px] rounded-full border-2 border-white" /></Slot>
        <Slot className="w-[45px]">
            <svg width="17" height="15" viewBox="0 0 17 15" fill="none" stroke="#ccd2d6" strokeWidth="1.100">
                <path d="M1 .5v2h10v-2M1 14.500v-2h10v2M14.500.5v3M14.500 8.500v6" />
                <rect x="1" y="4.500" width="10" height="6" />
                <path d="M14 5h1.500v1.800H14z" fill="#fff" />
            </svg>
        </Slot>
        <Slot className="w-[20px] gap-[2px]">
            <i className="h-[22px] w-px bg-[#42545c]" />
            <i className="h-[22px] w-px bg-[#42545c]" />
        </Slot>
        <Slot className="w-[38px] px-1"><div className="flex h-full w-full items-center justify-center border-b-2 border-[#76b9ed] pt-0.5"><Outlook /></div></Slot>
        <Slot className="w-[39px]"><Firefox /></Slot>
        <Slot className="w-[38px]"><Explorer /></Slot>
        <Slot className="w-[39px]"><Chrome /></Slot>
        <Slot className="w-[37px] border-b-2 border-[#76b9ed] bg-[#47606b] pt-0.5"><Edge /></Slot>
        <Slot className="w-[38px]"><OfficeIcon letter="X" color="#1f7244" sheet="M36 16h22M36 24h22M36 32h22M36 40h22M47 8v38" /></Slot>
        <Slot className="w-[39px]"><OfficeIcon letter="W" color="#2a5699" sheet="M38 15h17M38 21h17M38 27h17M38 33h17M38 39h17" /></Slot>
        <div className="ml-[3px] flex w-[16px] shrink-0 flex-col items-center justify-between bg-[#f0f0f0] py-[3px] text-[#555]">
            <ChevronUp size={12} strokeWidth={2.4} />
            <ChevronDown size={12} strokeWidth={2.4} />
        </div>
        <Tray />
    </div>
);

export default function App() {
    return (
        <div className={clsx('flex h-[675px] w-[1200px] flex-col overflow-hidden bg-white', UI)}>
            <TabStrip />
            <Toolbar />
            <div className="flex h-[570px] shrink-0 items-stretch">
                <main className="w-[798px]">
                    <Programme />
                </main>
                <Sidebar />
                <div className="flex w-[69px] flex-col justify-end pb-[27px] pl-[7px]">
                    <button className="flex size-[43.500px] items-center justify-center bg-[#cb2229]">
                        <svg width="28" height="15" viewBox="0 0 28 15" fill="none" stroke="#fff" strokeWidth="2.200">
                            <path d="M1.500 14 14 1.800 26.500 14" />
                        </svg>
                    </button>
                </div>
                <div className="flex w-[16px] flex-col items-center justify-between bg-[#f0f0f0] py-[5px]">
                    <svg width="7" height="5" viewBox="0 0 7 5"><path d="M0 4.500 3.500 1 7 4.500z" fill="#505050" /></svg>
                    <div className="mb-auto mt-[90px] h-[84px] w-[13px] bg-[#c1c1c1]" />
                    <svg width="7" height="5" viewBox="0 0 7 5"><path d="M0 .5 3.500 4 7 .5z" fill="#505050" /></svg>
                </div>
            </div>
            <Taskbar />
        </div>
    );
}
